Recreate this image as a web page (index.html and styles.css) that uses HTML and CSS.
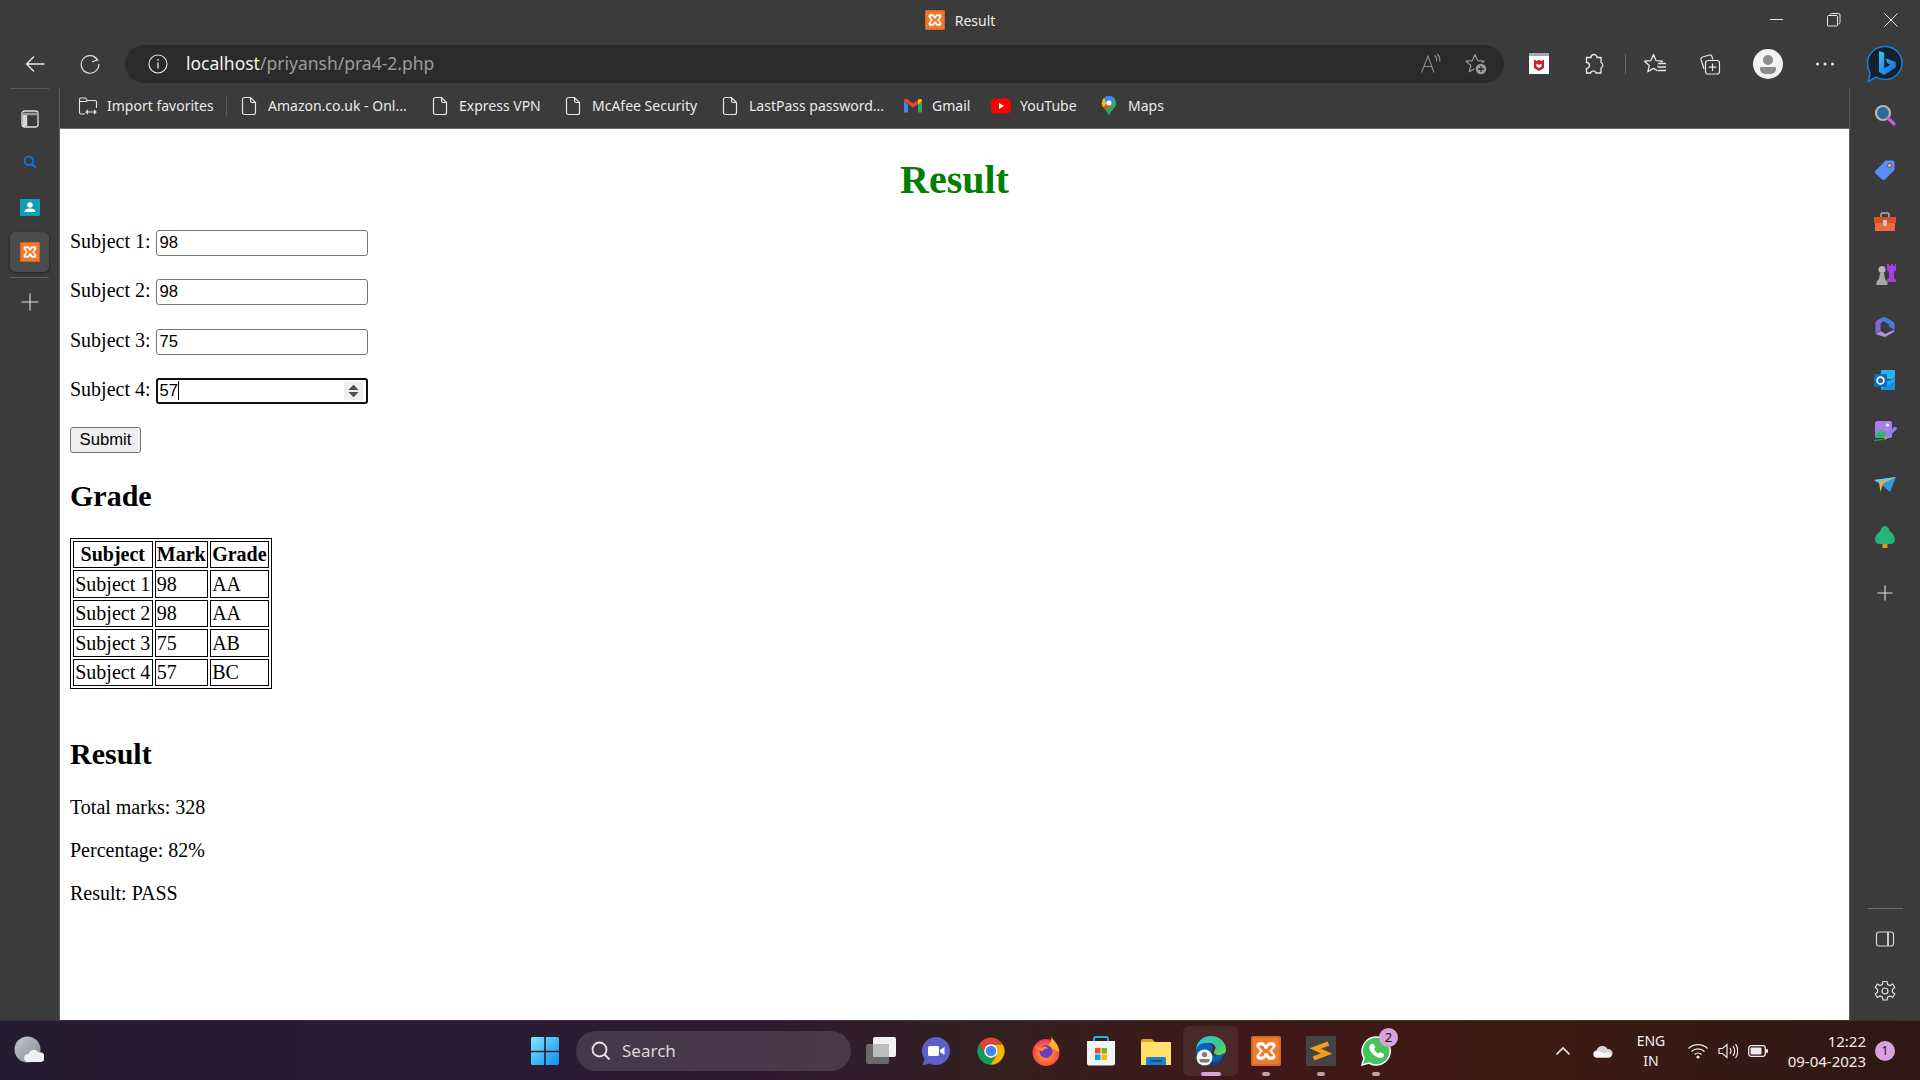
FILE: index.html
```html
<!DOCTYPE html>
<html lang="en">
<head>
<meta charset="utf-8">
<title>Result</title>
<link rel="stylesheet" href="styles.css">
</head>
<body>
<svg class="defs" width="0" height="0" aria-hidden="true">
  <defs>
    <symbol id="xampp" viewBox="0 0 20 20">
      <rect width="20" height="20" rx="1.5" fill="#ee7a2e"/>
      <rect x=".6" y=".6" width="18.8" height="18.8" rx="1.2" fill="none" stroke="#c9601f" stroke-width=".8"/>
      <path d="M5.6 4.2h2.6l1.8 1.8 1.8-1.8h2.6c2 0 2.7 2.5 1.2 3.8L14 10l1.600 2c1.500 1.300.8 3.800-1.200 3.800h-2.600L10 14l-1.800 1.800H5.600c-2 0-2.700-2.500-1.200-3.800L6 10 4.400 8C2.900 6.700 3.600 4.200 5.600 4.200z" fill="#fff"/>
      <path d="M6.300 6.300h1.300c.8 0 1.300 1.500 1.300 2.200h2.200c0-.7.5-2.200 1.300-2.200h1.300c.8 0 .9 1 .3 1.600L12 10l2.200 2.100c.6.600.5 1.600-.3 1.600h-1.300c-.8 0-1.300-1.500-1.300-2.200H8.900c0 .7-.5 2.200-1.300 2.200H6.300c-.8 0-.9-1-.3-1.600L8 10 6 7.900c-.6-.6-.5-1.600.3-1.600z" fill="#ee7a2e"/>
    </symbol>
    <symbol id="doc" viewBox="0 0 20 20">
      <path d="M3.500 3.500A2 2 0 0 1 5.500 1.500h6l5 5v10a2 2 0 0 1-2 2h-9a2 2 0 0 1-2-2zM11.500 1.500v3.300a1.700 1.700 0 0 0 1.700 1.700h3.300" fill="none" stroke="#e6e6e6" stroke-width="1.200"/>
    </symbol>
    <linearGradient id="win" x1="0" y1="0" x2="1" y2="1">
      <stop offset="0" stop-color="#7fe6ff"/><stop offset="1" stop-color="#0b8ff0"/>
    </linearGradient>
    <linearGradient id="edge" x1="0" y1="0" x2="1" y2="1">
      <stop offset="0" stop-color="#31c6dd"/><stop offset=".6" stop-color="#37c790"/><stop offset="1" stop-color="#7fd84a"/>
    </linearGradient>
    <radialGradient id="fox" cx=".5" cy=".55" r=".6">
      <stop offset="0" stop-color="#ffb03a"/><stop offset=".65" stop-color="#ff5b3a"/><stop offset="1" stop-color="#e4207e"/>
    </radialGradient>
    <linearGradient id="bing" x1="0" y1="0" x2="1" y2="1">
      <stop offset="0" stop-color="#38c6f4"/><stop offset="1" stop-color="#1264d8"/>
    </linearGradient>
  </defs>
</svg>

<div class="window">
  <header class="titlebar">
    <div></div>
    <div class="title">
      <svg class="i20"><use href="#xampp"/></svg>
      <span>Result</span>
    </div>
    <div class="winctl">
      <svg class="wc" viewBox="0 0 14 14"><path d="M0 6.500h13" stroke="#e8e8e8" fill="none"/></svg>
      <svg class="wc" viewBox="0 0 14 14"><path d="M3 2.500V2a1.500 1.500 0 0 1 1.500-1.500h7A1.500 1.500 0 0 1 13 2v7.500A1.500 1.500 0 0 1 11.500 11M1.500 2.500h8a1 1 0 0 1 1 1v8.500a1 1 0 0 1-1 1h-8a1 1 0 0 1-1-1V3.500a1 1 0 0 1 1-1z" stroke="#e8e8e8" fill="none"/></svg>
      <svg class="wc" viewBox="0 0 14 14"><path d="M.5.500l13 13M13.500.500l-13 13" stroke="#e8e8e8" fill="none"/></svg>
    </div>
  </header>

  <nav class="toolbar">
    <div class="nav-btn">
      <svg class="i20" viewBox="0 0 20 20"><path d="M19.500 10H1.500M9 2.500L1.500 10 9 17.500" fill="none" stroke="#e8e8e8" stroke-width="1.300"/></svg>
    </div>
    <div class="nav-btn">
      <svg class="i20" viewBox="0 0 20 20"><path d="M17.500 5.800A8.800 8.800 0 1 0 18.800 10M12.500 1.500l5.200 4.400-5.600 1.800" fill="none" stroke="#e0e0e0" stroke-width="1.200"/></svg>
    </div>
    <div class="addr">
      <svg class="i20" viewBox="0 0 20 20"><circle cx="10" cy="10" r="9" fill="none" stroke="#e6e6e6" stroke-width="1.100"/><path d="M10 8.500v6" stroke="#e6e6e6" stroke-width="1.300"/><circle cx="10" cy="5.800" r=".9" fill="#e6e6e6"/></svg>
      <div class="url"><span class="host">localhost</span><span class="path">/priyansh/pra4-2.php</span></div>
      <svg class="i22" viewBox="0 0 22 22"><path d="M1.500 19.500L8 3l6 16.500M4 13.500h8M14.500 2.500c2 1.500 2.500 4 2 6M17 1c2.500 2 3.200 5 2.600 7.500" fill="none" stroke="#8f8f8f" stroke-width="1.100"/></svg>
      <svg class="i22" viewBox="0 0 22 22"><path d="M10 1.500L12.600 7.600 19 8.200 14.200 12.400 15.700 18.800 10 15.400 4.300 18.800 5.800 12.400 1 8.200 7.400 7.600Z" fill="none" stroke="#9a9a9a" stroke-width="1.200" stroke-linejoin="round"/><circle cx="16" cy="16" r="6.500" fill="#2b2b2b"/><circle cx="16" cy="16" r="5.300" fill="#9a9a9a"/><path d="M16 13v6M13 16h6" stroke="#2b2b2b" stroke-width="1.300"/></svg>
    </div>
    <div class="tb">
      <svg class="i22" viewBox="0 0 22 22"><rect x="1" width="20" height="21" fill="#fff"/><rect x="1" width="20" height="3" fill="#a8a8a8"/><path d="M6 6.500l2.700 1.500L11 6.800 13.300 8 16 6.500v8.500L11 18l-5-3z" fill="#c8202a"/><path d="M8.500 10.500l2.500 1.500 2.500-1.500v3L11 15l-2.500-1.500z" fill="#fff"/></svg>
    </div>
    <div class="tb">
      <svg class="i22" viewBox="0 0 22 22"><path d="M8 4.500a3 3 0 0 1 6 0h4v5a3 3 0 0 1 0 5.500v5h-5a2.800 2.800 0 0 0-5.400 0H3.500v-4.500a3 3 0 0 0 0-6V4.500z" fill="none" stroke="#e8e8e8" stroke-width="1.300"/></svg>
    </div>
    <div class="tb-sep"></div>
    <div class="tb">
      <svg class="i22" viewBox="0 0 22 22"><path d="M9.500 1.500L12 7.600 18.500 8.200 13.700 12.400 15.200 18.800 9.500 15.400 3.800 18.800 5.300 12.400.5 8.200 6.900 7.600Z" fill="none" stroke="#e8e8e8" stroke-width="1.300" stroke-linejoin="round"/><rect x="13.500" y="9.500" width="8.500" height="10" fill="#3b3b3b"/><path d="M14 10.500h8M14 14h8M14 17.500h8" fill="none" stroke="#e8e8e8" stroke-width="1.300"/></svg>
    </div>
    <div class="tb">
      <svg class="i22" viewBox="0 0 22 22"><rect x="6.500" y="7.500" width="14" height="13.500" rx="2.500" fill="none" stroke="#e8e8e8" stroke-width="1.200"/><path d="M13.500 10.500v7.500M9.800 14.200h7.500M5 16L2 6.500a2 2 0 0 1 1.500-2.500l7-2a2 2 0 0 1 2.500 1.500l.7 3" fill="none" stroke="#e8e8e8" stroke-width="1.200"/></svg>
    </div>
    <div class="tb tb-avatar">
      <svg class="i30" viewBox="0 0 30 30"><circle cx="15" cy="15" r="15" fill="#f2f2f2"/><circle cx="15" cy="11" r="5" fill="#8c8c8c"/><path d="M7 18h16v2a5 5 0 0 1-5 5h-6a5 5 0 0 1-5-5z" fill="#8c8c8c"/></svg>
    </div>
    <div class="tb">
      <svg class="i22" viewBox="0 0 22 22"><circle cx="3.500" cy="11" r="1.500" fill="#e8e8e8"/><circle cx="11" cy="11" r="1.500" fill="#e8e8e8"/><circle cx="18.500" cy="11" r="1.500" fill="#e8e8e8"/></svg>
    </div>
    <div class="tb-bing">
      <svg class="i38" viewBox="0 0 38 38"><path d="M19 1.500c9.500 0 17 7.300 17 16.500S28.500 34.500 19 34.500c-3.500 0-6.500-.8-9-2.300L2.500 36.500l1.500-8C2.500 25.500 1.500 22 1.500 18 1.500 8.800 9.500 1.500 19 1.500z" fill="#16202c" stroke="#1b7ee6" stroke-width="1.500"/><path d="M13 6l5.200 1.800v15.500l6.300-3.600-3.100-1.400-2-5 10.400 3.600v5.600L18.200 30 13 27z" fill="url(#bing)"/></svg>
    </div>
  </nav>

  <div class="middle">
    <aside class="left-rail">
      <div class="lr-line"></div>
      <div class="lr">
        <svg class="i20" viewBox="0 0 20 20"><rect x="2" y="2" width="16" height="16" rx="2.500" fill="none" stroke="#e0e0e0" stroke-width="1.300"/><path d="M2 5.500h16M2 4.500h16" stroke="#9a9a9a" stroke-width="1.500"/><rect x="2.700" y="6" width="4.500" height="11.400" fill="#d8d8d8"/></svg>
      </div>
      <div class="lr lr-search">
        <svg class="i20" viewBox="0 0 20 20"><circle cx="8.800" cy="8.800" r="4.300" fill="none" stroke="#0b78d8" stroke-width="1.800"/><path d="M12 12l3.800 3.800" stroke="#0b78d8" stroke-width="2"/></svg>
      </div>
      <div class="lr lr-teal">
        <svg class="i20" viewBox="0 0 20 20"><rect y="1" width="20" height="17" rx="1" fill="#10a0ba"/><circle cx="10" cy="7" r="2.700" fill="#fff"/><path d="M4.500 14c0-2.500 2.500-3.500 5.500-3.500s5.500 1 5.500 3.500z" fill="#fff"/></svg>
      </div>
      <div class="lr-active">
        <svg class="i20"><use href="#xampp"/></svg>
      </div>
      <div class="lr-line lr-line-below"></div>
      <div class="lr-plus">
        <svg class="i20" viewBox="0 0 20 20"><path d="M10 1.500v17M1.500 10h17" stroke="#e0e0e0" stroke-width="1.100"/></svg>
      </div>
    </aside>

    <div class="center">
      <div class="bookmarks">
        <div class="bm">
          <svg class="i20" viewBox="0 0 20 20"><path d="M7 18H3a1.500 1.500 0 0 1-1.500-1.500v-13A1.500 1.500 0 0 1 3 2h4.500l2 2.500H17A1.500 1.500 0 0 1 18.500 6v6M1.500 5.500h6.500l1.500-1M8 16h10M10 14l-2 2 2 2M16 14l2 2-2 2" fill="none" stroke="#e6e6e6" stroke-width="1.100"/></svg>
          <span>Import favorites</span>
        </div>
        <div class="bm-sep"></div>
        <div class="bm"><svg class="i20"><use href="#doc"/></svg><span>Amazon.co.uk - Onl...</span></div>
        <div class="bm"><svg class="i20"><use href="#doc"/></svg><span>Express VPN</span></div>
        <div class="bm"><svg class="i20"><use href="#doc"/></svg><span>McAfee Security</span></div>
        <div class="bm"><svg class="i20"><use href="#doc"/></svg><span>LastPass password...</span></div>
        <div class="bm">
          <svg class="i20" viewBox="0 0 20 20"><path d="M1 5v11.500h4V9z" fill="#4285f4"/><path d="M15 9v7.500h4V5z" fill="#34a853"/><path d="M1 5l9 6.800L19 5v-.5C19 3 17 2.300 15.800 3.200L10 7.500 4.200 3.200C3 2.300 1 3 1 4.500z" fill="#ea4335"/><path d="M15 4v5l4-4v-.5C19 3 17.500 2.500 16 3.200z" fill="#fbbc04"/></svg>
          <span>Gmail</span>
        </div>
        <div class="bm">
          <svg class="i20" viewBox="0 0 20 20"><rect y="2.500" width="20" height="15" rx="4.500" fill="#f00"/><path d="M8 7l5.200 3L8 13z" fill="#fff"/></svg>
          <span>YouTube</span>
        </div>
        <div class="bm">
          <svg class="i20" viewBox="0 0 20 20"><path d="M10 0a7.200 7.200 0 0 1 7.200 7.200c0 4.800-5.200 6.300-7.200 12.800C8 13.500 2.800 12 2.800 7.200A7.200 7.200 0 0 1 10 0z" fill="#34a853"/><path d="M5 2A7.200 7.200 0 0 0 2.800 7.200c0 1.600.6 2.800 1.500 4L10 5.500z" fill="#fbbc04"/><path d="M5 2a7.200 7.200 0 0 1 5-2l-.6 4.500L7.500 7.500z" fill="#4285f4"/><path d="M10 0a7.200 7.200 0 0 1 6.300 3.700L12 8 9 5z" fill="#4285f4"/><path d="M4.300 11.200L10 5.500l2 2.500-6.200 5.800z" fill="#ea4335"/><circle cx="10" cy="7" r="2.500" fill="#fff"/></svg>
          <span>Maps</span>
        </div>
      </div>

      <main class="page">
        <h1 class="page-title">Result</h1>
        <form class="form">
          <p class="row"><label>Subject 1: <input class="field" type="text" value="98"></label></p>
          <p class="row"><label>Subject 2: <input class="field" type="text" value="98"></label></p>
          <p class="row"><label>Subject 3: <input class="field" type="text" value="75"></label></p>
          <p class="row"><label>Subject 4: <span class="focus-wrap"><input class="field field-focus" type="text" value="57"><span class="caret"></span><svg class="spin" viewBox="0 0 20 20"><rect width="20" height="20" fill="#efefef"/><path d="M10 3.500l5.500 5.500h-11zM10 16.500L4.500 11h11z" fill="#505050"/></svg></span></label></p>
          <p class="row"><button class="submit" type="button">Submit</button></p>
        </form>
        <h2 class="sec sec-grade">Grade</h2>
        <table class="grades">
          <tr><th>Subject</th><th>Mark</th><th>Grade</th></tr>
          <tr><td>Subject 1</td><td>98</td><td>AA</td></tr>
          <tr><td>Subject 2</td><td>98</td><td>AA</td></tr>
          <tr><td>Subject 3</td><td>75</td><td>AB</td></tr>
          <tr><td>Subject 4</td><td>57</td><td>BC</td></tr>
        </table>
        <br>
        <h2 class="sec">Result</h2>
        <p class="line">Total marks: 328</p>
        <p class="line">Percentage: 82%</p>
        <p class="line">Result: PASS</p>
      </main>
    </div>

    <aside class="right-rail">
      <div class="rr">
        <svg class="i22" viewBox="0 0 22 22"><circle cx="9" cy="9" r="7" fill="#2e6a96" stroke="#b5b5b5" stroke-width="2.200"/><path d="M14.500 14.500l5.500 5.500" stroke="#d14fd8" stroke-width="3.200" stroke-linecap="round"/></svg>
      </div>
      <div class="rr rr-tag">
        <svg class="i22" viewBox="0 0 22 22"><path d="M12 1.500h7a1.500 1.500 0 0 1 1.500 1.500v7a2 2 0 0 1-.6 1.400l-9 9a2 2 0 0 1-2.800 0L1.600 14.400a2 2 0 0 1 0-2.800l9-9A2 2 0 0 1 12 1.500z" fill="#5a8cf8"/><circle cx="15.500" cy="6.500" r="2" fill="#ffd23a" stroke="#2a3a70" stroke-width=".7"/></svg>
      </div>
      <div class="rr">
        <svg class="i24" viewBox="0 0 24 24"><path d="M8 7V4.500A1.500 1.500 0 0 1 9.500 3h5A1.500 1.500 0 0 1 16 4.500V7" fill="none" stroke="#b0b0b0" stroke-width="1.500"/><rect x="1" y="7" width="22" height="6" fill="#d84f2a"/><rect x="2" y="13" width="20" height="8" fill="#ee6a3c"/><rect x="10" y="10" width="4" height="6" fill="#c9c9c9"/></svg>
      </div>
      <div class="rr">
        <svg class="i24" viewBox="0 0 24 24"><circle cx="9" cy="6.500" r="3.500" fill="#b5b5b5"/><path d="M7 10h4l1 6 2.500 3v3H3.500v-3L6 16z" fill="#a8a8a8"/><path d="M14 1h2v2h2V1h2v2h2V1h1v6l-2 2v6l2 2v2h-9.500l.5-2 2-2V9l-2-2z" fill="#a83ee0"/></svg>
      </div>
      <div class="rr">
        <svg class="i22" viewBox="0 0 22 22"><path d="M9 1.500a3 3 0 0 1 3 0l7 4a3 3 0 0 1 1.500 2.500v6L15 10.500V8.500L9 5z" fill="#3d7ed8"/><path d="M1.500 7a3 3 0 0 1 1.500-2.500l6-3.500v4.500l-2.500 2v7l-5 3z" fill="#7a6ae0"/><path d="M1.500 18l5-3 5 3 3.500-2 5.500-2a3 3 0 0 1-1.500 2.500l-7 4a3 3 0 0 1-3 0z" fill="#b48ae8"/><circle cx="11" cy="11" r="3.500" fill="#3b3b3b"/></svg>
      </div>
      <div class="rr">
        <svg class="i22" viewBox="0 0 22 22"><rect x="7" y="1" width="14" height="9" fill="#29b4ea"/><path d="M21 8v12a1 1 0 0 1-1 1H7v-6z" fill="#1490df"/><path d="M7 21l14-9v-2L7 15z" fill="#28a8ea"/><rect x="0" y="5" width="13" height="13" rx="1" fill="#0f6cbd"/><circle cx="6.500" cy="11.500" r="3.400" fill="none" stroke="#fff" stroke-width="1.700"/></svg>
      </div>
      <div class="rr">
        <svg class="i24" viewBox="0 0 24 24"><rect x="2" y="1" width="17" height="17" rx="2" fill="#a87ee8"/><path d="M2 16l6-7 6 5v4H4a2 2 0 0 1-2-2z" fill="#2db37c"/><circle cx="14.500" cy="5" r="1.500" fill="#fff"/><path d="M13 17l9-8.500" stroke="#8a82ec" stroke-width="3.500" stroke-linecap="round"/><path d="M11 20l1-4 3 2z" fill="#f2a12e"/><path d="M1 21c2-2 3 0 5-1s3-1 4 0" fill="none" stroke="#1f9e68" stroke-width="1.200"/></svg>
      </div>
      <div class="rr">
        <svg class="i22" viewBox="0 0 22 22"><path d="M0 6l22-3-6 15-7-6z" fill="#2f9ae8"/><path d="M0 6l22-3-13 6-1 1z" fill="#6cc6f0"/><path d="M5 8.500l17-5.500L9 9.500 6.500 18z" fill="#f4b028"/></svg>
      </div>
      <div class="rr">
        <svg class="i22" viewBox="0 0 22 22"><rect x="8.500" y="17" width="5" height="5" fill="#e6980f"/><path d="M11 0c2.500 0 4 3 4.800 5.300C18.500 7 21 10 21 13.500c0 2.500-1.800 4.500-4.500 4.500h-11C2.800 18 1 16 1 13.500 1 10 3.500 7 6.200 5.300 7 3 8.500 0 11 0z" fill="#27b477"/></svg>
      </div>
      <div class="rr rr-add">
        <svg class="i20" viewBox="0 0 20 20"><path d="M10 2.500v15M2.500 10h15" stroke="#e0e0e0" stroke-width="1.100"/></svg>
      </div>
      <div class="rr-spacer"></div>
      <div class="rr-line"></div>
      <div class="rr-low">
        <svg class="i20" viewBox="0 0 20 20"><rect x="1.500" y="3" width="17" height="14" rx="2.500" fill="none" stroke="#d8d8d8" stroke-width="1.200"/><path d="M13 3v14" stroke="#d8d8d8" stroke-width="1.800"/></svg>
      </div>
      <div class="rr-low">
        <svg class="i22" viewBox="0 0 22 22"><path d="M9 1.500h4l.7 3 2.300 1 2.700-1.500 2 3.400-2.300 2.100v2.500l2.300 2-2 3.500-2.700-1.500-2.300 1-.7 3H9l-.7-3-2.300-1-2.700 1.500-2-3.500 2.300-2V9.500L1.300 7.400l2-3.400L6 5.500l2.300-1z" fill="none" stroke="#e0e0e0" stroke-width="1.200"/><circle cx="11" cy="11" r="3" fill="none" stroke="#e0e0e0" stroke-width="1.200"/></svg>
      </div>
    </aside>
  </div>

  <footer class="taskbar">
    <div class="tk-left">
      <svg class="i30" viewBox="0 0 30 30"><defs><linearGradient id="moon" x1="0" y1="0" x2="1" y2="1"><stop offset="0" stop-color="#c2c8d0"/><stop offset="1" stop-color="#7f8a96"/></linearGradient></defs><circle cx="13.500" cy="13.500" r="13" fill="url(#moon)"/><path d="M14 26a4 4 0 0 1 .5-8 5.500 5.500 0 0 1 10-1.500 4.800 4.800 0 0 1 3 9.500z" fill="#eef0f4"/></svg>
    </div>
    <div class="tk-center">
      <div class="tk-start">
        <svg class="i30" viewBox="0 0 30 30"><path d="M1 2.500A1.500 1.500 0 0 1 2.500 1h11.700v13.700H1zM15.800 1h11.700A1.500 1.500 0 0 1 29 2.500v12.200H15.800zM1 16.300h13.200V29H2.500A1.500 1.500 0 0 1 1 27.500zM15.800 16.300H29v11.200a1.500 1.500 0 0 1-1.500 1.500H15.800z" fill="url(#win)"/></svg>
      </div>
      <div class="tk-search">
        <svg class="i20" viewBox="0 0 20 20"><circle cx="8.500" cy="8.500" r="7" fill="none" stroke="#e8e2e6" stroke-width="1.800"/><path d="M13.500 13.500l5 5" stroke="#e8e2e6" stroke-width="2"/></svg>
        <span>Search</span>
      </div>
      <div class="tk-apps">
        <div class="app">
          <svg class="i30" viewBox="0 0 30 30"><rect x="0" y="8" width="23" height="20" rx="2" fill="#6a6a6a"/><rect x="7" y="1" width="23" height="20" rx="2" fill="#f2f2f2"/><rect x="7" y="8" width="16" height="13" fill="#bdbdbd"/></svg>
        </div>
        <div class="app">
          <svg class="i30" viewBox="0 0 30 30"><path d="M15 1a14 14 0 1 1-6.500 26.400L1.500 29.500l2-6.500A14 14 0 0 1 15 1z" fill="#5b5fc7"/><rect x="7" y="10" width="11" height="10" rx="1.500" fill="#fff"/><path d="M19 14l4.500-3v8l-4.500-3z" fill="#fff"/></svg>
        </div>
        <div class="app">
          <svg class="i30" viewBox="0 0 48 48"><path fill="#db4437" d="M43 13.500A22 22 0 0 0 5 13L14.600 29.600A11 11 0 0 1 24 13.500z"/><path fill="#0f9d58" d="M5 13a22 22 0 0 0 18 33L33.500 29.500A11 11 0 0 1 14.500 29.500z"/><path fill="#f4b400" d="M23 46A22 22 0 0 0 43 13.500H24A11 11 0 0 1 33.500 29.500z"/><circle cx="24" cy="24" r="11" fill="#fff"/><circle cx="24" cy="24" r="8.500" fill="#4285f4"/></svg>
        </div>
        <div class="app">
          <svg class="i30" viewBox="0 0 30 30"><circle cx="15" cy="16.500" r="13.500" fill="url(#fox)"/><path d="M20 0c1 3 3 4 5 7 3 4 3 9 3 9l-6-3-5-4c3-2 4-5 3-9z" fill="#ffb02e"/><circle cx="15" cy="15.500" r="6.500" fill="#6d3bc0"/><path d="M4 9c2 3 5 3 8 2 2-1 5 0 5 2-2-1-5 0-5 2-3 0-7-2-8-6z" fill="#ff8f2e"/></svg>
        </div>
        <div class="app">
          <svg class="i30" viewBox="0 0 30 30"><path d="M8 5V2.500A1.500 1.500 0 0 1 9.500 1h11A1.500 1.500 0 0 1 22 2.500V5" fill="none" stroke="#1ab4ee" stroke-width="1.800"/><path d="M1 5h28v22a2.500 2.500 0 0 1-2.500 2.500h-24A2.500 2.500 0 0 1 1 27z" fill="#f4f4f4"/><rect x="9" y="12" width="5.500" height="5.500" fill="#f25022"/><rect x="15.500" y="12" width="5.500" height="5.500" fill="#7fba00"/><rect x="9" y="18.500" width="5.500" height="5.500" fill="#00a4ef"/><rect x="15.500" y="18.500" width="5.500" height="5.500" fill="#ffb900"/></svg>
        </div>
        <div class="app">
          <svg class="i30" viewBox="0 0 30 30"><path d="M0 5a2 2 0 0 1 2-2h9l3 3h16v22H0z" fill="#e2a70f"/><rect y="6" width="30" height="23" fill="#ffe06a"/><path d="M5 29v-6a2 2 0 0 1 2-2h16a2 2 0 0 1 2 2v6z" fill="#1d7fd0"/><rect x="9" y="24" width="12" height="1.800" fill="#0b4f90"/></svg>
        </div>
        <div class="app app-active">
          <svg class="i30" viewBox="0 0 30 30"><path d="M15 0c8.500 0 15 6 15 13.500 0 3.500-2.500 6-6 6-3 0-6-1.200-6-3.500 0-1.500 1.500-2 1.500-4 0-3-3-5-7-5C7 7 1.500 10 0 15 0 6 6.500 0 15 0z" fill="url(#edge)"/><path d="M0 15c0-5 5-8 9.500-8 4 0 7 2 7 5 0 2-1.500 2.500-1.500 4 0 2.500 3 3.500 6 3.500 2 0 5-.5 7-3-1 7-7 12-14 13C6 29.500 0 23 0 15z" fill="#0b5fbb"/><path d="M28 20.500c-1.500 5-7 9-13 9l-2-5c3 2 11 2 15-4z" fill="#0a3f80"/><circle cx="8.500" cy="21.500" r="8" fill="#f2f2f2"/><circle cx="8.500" cy="18.500" r="2.600" fill="#7a7a7a"/><path d="M3.500 23h10v1a2.500 2.500 0 0 1-2.500 2.500H6A2.500 2.500 0 0 1 3.500 24z" fill="#7a7a7a"/></svg>
          <span class="pill pill-on"></span>
        </div>
        <div class="app">
          <svg class="i30"><use href="#xampp"/></svg>
          <span class="pill"></span>
        </div>
        <div class="app">
          <svg class="i30" viewBox="0 0 30 30"><rect width="30" height="30" rx="1.500" fill="#444"/><path d="M22.500 7.500L9.500 12.500 20.500 17.500 7.500 22.500" fill="none" stroke="#f29d1c" stroke-width="4.500"/></svg>
          <span class="pill"></span>
        </div>
        <div class="app">
          <svg class="i30" viewBox="0 0 30 30"><path d="M15 1a14 14 0 1 1-7 26L1 29l2-7A14 14 0 0 1 15 1z" fill="#44c25b" stroke="#fff" stroke-width="1.500"/><path d="M10 8l2.500-.5 2 4-1.500 1.500c1 2 2.500 3.500 4.500 4.500l1.500-1.500 4 2-.5 2.500c-1 1.500-3 2-5 1-4-1-8-5-9-9-.5-2 .5-3.500 1.500-4.500z" fill="#fff"/></svg>
          <span class="pill"></span>
          <span class="count">2</span>
        </div>
      </div>
    </div>
    <div class="tray">
      <svg class="tray-i chev" viewBox="0 0 14 14"><path d="M.5 10.500L7 4l6.500 6.500" fill="none" stroke="#f0eaea" stroke-width="1.600"/></svg>
      <svg class="tray-i cloud" viewBox="0 0 20 14"><path d="M4 13.500a3.500 3.500 0 0 1-.5-7 6 6 0 0 1 11-1.500 4.300 4.300 0 0 1 1.500 8.500z" fill="#d8d4d4"/><path d="M4 13.500a3 3 0 0 1 0-6c3-1 5 .5 7 2l5-1.500c3 1 3 5.500 0 5.500z" fill="#fbfafa"/></svg>
      <div class="lang"><span>ENG</span><span>IN</span></div>
      <svg class="tray-i wifi" viewBox="0 0 20 16"><path d="M.5 5.500a13.500 13.500 0 0 1 19 0M3.500 8.500a9.300 9.300 0 0 1 13 0M6.500 11.500a5 5 0 0 1 7 0" fill="none" stroke="#f0eaea" stroke-width="1.300"/><circle cx="10" cy="14" r="1.600" fill="#f0eaea"/></svg>
      <svg class="tray-i vol" viewBox="0 0 20 16"><path d="M1 5.500h3.500L9 1.500v13L4.500 10.500H1zM12 5c1.200 1.800 1.200 4.200 0 6M15 3c2 3 2 7 0 10M17.500 1c3 4 3 10 0 14" fill="none" stroke="#f0eaea" stroke-width="1.200"/></svg>
      <svg class="tray-i batt" viewBox="0 0 20 14"><rect x=".7" y="1.700" width="16.600" height="10.600" rx="2.500" fill="none" stroke="#f0eaea" stroke-width="1.300"/><rect x="2.500" y="3.500" width="11" height="7" rx="1" fill="#f0eaea"/><rect x="18" y="5" width="2" height="4" rx="1" fill="#f0eaea"/></svg>
      <div class="clock"><span>12:22</span><span>09-04-2023</span></div>
      <div class="notif">1</div>
    </div>
  </footer>
</div>
</body>
</html>
```
FILE: styles.css
```css
* { box-sizing: border-box; }
html, body { margin: 0; padding: 0; height: 100%; overflow: hidden; }
body { font-family: "Noto Sans", "Open Sans", sans-serif; }
.defs { position: absolute; }

svg { display: block; flex: none; }
.i20 { width: 20px; height: 20px; }
.i22 { width: 22px; height: 22px; }
.i24 { width: 24px; height: 24px; }
.i30 { width: 30px; height: 30px; }
.i38 { width: 38px; height: 38px; }

.window { width: 1920px; height: 1080px; display: flex; flex-direction: column; background: #3b3b3b; }

/* title bar */
.titlebar { height: 45px; display: grid; grid-template-columns: 1fr auto 1fr; align-items: center; flex: none; }
.title { display: flex; align-items: center; gap: 10px; color: #ececec; font-size: 14px; margin-top: -5px; }
.winctl { display: flex; justify-content: flex-end; gap: 43px; padding-right: 22px; margin-top: -6px; }
.wc { width: 14px; height: 14px; }

/* toolbar */
.toolbar { height: 43px; display: flex; align-items: flex-start; padding-left: 10px; flex: none; }
.nav-btn { width: 50px; height: 38px; display: flex; align-items: center; justify-content: center; margin-right: 5px; }
.addr { width: 1379px; height: 38px; margin-left: 5px; border-radius: 19px; background: #2b2b2b; display: flex; align-items: center; padding: 0 17px 0 23px; gap: 23px; }
.url { flex: 1; font-size: 17.5px; line-height: 24px; color: #9b9b9b; margin: -2px 0 0 -5px; white-space: nowrap; }
.host { color: #f2f2f2; }
.tb { width: 55px; height: 38px; display: flex; align-items: center; justify-content: center; }
.addr + .tb { margin-left: 7px; }
.tb-sep { width: 1px; height: 20px; background: #686868; margin: 9px 1px 0 4px; }
.tb-avatar { margin-left: 3px; margin-right: 2px; }
.tb-bing { margin-left: 14px; }

/* middle */
.middle { flex: 1; display: flex; min-height: 0; }
.left-rail { width: 60px; flex: none; border-right: 1px solid #5c5c5c; display: flex; flex-direction: column; align-items: center; }
.lr-line { width: 39px; height: 1px; background: #5c5c5c; margin-bottom: 9px; flex: none; }
.lr { height: 42px; width: 39px; display: flex; align-items: center; justify-content: center; flex: none; }
.lr-search { margin-top: 1px; }
.lr-teal { margin-top: 4px; }
.lr + .lr-active { margin-top: 3px; }
.lr-active { width: 39px; height: 40px; border-radius: 6px; background: #4c4c4c; box-shadow: 0 1px 3px rgba(0,0,0,.45); display: flex; align-items: center; justify-content: center; flex: none; }
.lr-line-below { margin: 5px 0 14px; }
.lr-plus { height: 20px; display: flex; align-items: center; justify-content: center; }

.center { flex: 1; min-width: 0; display: flex; flex-direction: column; }
.bookmarks { height: 41px; border-bottom: 1px solid #6e6e6e; padding: 0 0 5px 18px; flex: none; display: grid; grid-template-columns: 148px 13px 191px 133px 157px 183px 88px 108px auto; align-items: center; color: #eaeaea; font-size: 14px; }
.bm { display: flex; align-items: center; gap: 9px; white-space: nowrap; }
.bm-sep { width: 1px; height: 20px; background: #5c5c5c; }

/* page */
.page { flex: 1; background: #fff; color: #000; font-family: "Liberation Serif", "Times New Roman", serif; font-size: 20px; padding: 0 10px; overflow: hidden; }
.page-title { font-size: 40px; font-weight: bold; color: #008000; text-align: center; margin: 27px 0 27px; }
.row { margin: 20px 0; min-height: 29.25px; }
.form .row:first-child { margin-top: 0; }
.form .row:last-child { margin-bottom: 0; }
.field { width: 212px; height: 26px; border: 1px solid #767676; border-radius: 3px; padding: 1px 3px; font-family: "Liberation Sans", Arial, sans-serif; font-size: 16.67px; color: #000; background: #fff; vertical-align: baseline; outline: none; }
.focus-wrap { position: relative; display: inline-block; }
.field-focus { border: 2px solid #101010; padding: 0 2px; }
.caret { position: absolute; left: 22px; top: 3px; width: 1px; height: 19px; background: #000; }
.spin { position: absolute; right: 5px; top: 3px; width: 19px; height: 20px; }
.submit { width: 71px; height: 26px; border: 1px solid #767676; border-radius: 3px; background: #efefef; font-family: "Liberation Sans", Arial, sans-serif; font-size: 16.67px; color: #000; padding: 0; }
.sec { font-size: 30px; font-weight: bold; margin: 25px 0; }
.sec-grade { margin-top: 22.5px; }
.grades { border: 1px solid #000; border-spacing: 2px; border-collapse: separate; }
.grades th, .grades td { border: 1px solid #000; padding: 1.25px; }
.line { margin: 20px 0; }

/* right rail */
.right-rail { width: 71px; flex: none; border-left: 1px solid #5c5c5c; display: flex; flex-direction: column; align-items: center; padding-top: 1px; }
.rr { height: 52.5px; width: 100%; display: flex; align-items: center; justify-content: center; flex: none; }
.rr-tag { margin-top: 2px; }
.rr-add { margin-top: 3px; }
.rr-spacer { flex: 1; }
.rr-line { width: 35px; height: 1px; background: #6e6e6e; flex: none; margin-bottom: 4px; }
.rr-low { height: 52px; width: 100%; display: flex; align-items: center; justify-content: center; flex: none; }
.rr-low:last-child { margin-bottom: 3px; }

/* taskbar */
.taskbar { height: 60px; flex: none; display: flex; align-items: center; position: relative; color: #f2eeee; border-top: 1px solid #3d2f38; background: linear-gradient(90deg, #231b2f 0%, #2a1b33 25%, #2f1a31 40%, #33201f 52%, #3f1817 65%, #3e1a14 80%, #2e1814 100%); }
.tk-left { width: 530px; padding-left: 14px; flex: none; }
.tk-center { display: flex; align-items: center; flex: none; }
.tk-start { width: 30px; margin-right: 16px; }
.tk-search { width: 275px; height: 40px; border-radius: 20px; background: rgba(255,255,255,.13); display: flex; align-items: center; gap: 11px; padding-left: 15px; font-size: 17px; color: #ddd6da; font-family: "Noto Sans", sans-serif; }
.tk-apps { display: flex; margin-left: 2px; }
.app { width: 55px; height: 50px; position: relative; display: flex; align-items: center; justify-content: center; }
.app-active { background: rgba(255,255,255,.07); border-radius: 6px; }
.pill { position: absolute; left: 50%; bottom: 0; width: 8px; height: 4px; margin-left: -4px; border-radius: 2px; background: #b9a5a5; }
.pill-on { width: 20px; margin-left: -10px; background: #d9a2df; }
.count { position: absolute; left: 31px; top: 2px; width: 19px; height: 19px; border-radius: 50%; background: #d9a2df; color: #1a1020; font-size: 13px; line-height: 19px; text-align: center; }
.tray { flex: 1; display: flex; align-items: center; font-size: 14px; }
.tray-i { flex: none; }
.chev { width: 14px; height: 14px; margin-left: 153px; }
.cloud { width: 20px; height: 14px; margin-left: 23px; }
.lang { width: 36px; margin-left: 20px; display: flex; flex-direction: column; align-items: center; line-height: 20px; }
.wifi { width: 20px; height: 16px; margin-left: 19px; }
.vol { width: 20px; height: 16px; margin-left: 10px; }
.batt { width: 20px; height: 14px; margin-left: 10px; }
.clock { width: 98px; font-size: 15px; display: flex; flex-direction: column; align-items: flex-end; line-height: 20px; }
.notif { width: 20px; height: 20px; margin-left: 9px; border-radius: 50%; background: #d9a2df; color: #1a1020; font-size: 12px; line-height: 20px; text-align: center; }
```
